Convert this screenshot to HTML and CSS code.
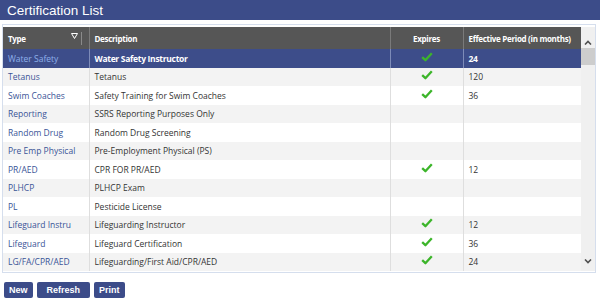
FILE: index.html
```html
<!DOCTYPE html>
<html lang="en">
<head>
    <meta charset="UTF-8">
    <meta name="viewport" content="width=device-width, initial-scale=1.0">
    <title>Certification List</title>
    <link rel="stylesheet" href="styles.css">
</head>
<body>
    <div class="title">Certification List</div>

    <div class="panel">
        <div class="grid">
            <table class="cert-table">
                <colgroup>
                    <col class="col-type">
                    <col class="col-desc">
                    <col class="col-exp">
                    <col class="col-period">
                </colgroup>
                <thead>
                    <tr>
                        <th class="th-type">
                            <span>Type</span>
                            <span class="filter">
                                <svg width="7" height="6" viewBox="0 0 7 6"><path d="M0.5 0.5 H6.5 L3.5 5.5 Z" fill="none" stroke="#fff" stroke-width="1"/></svg>
                            </span>
                        </th>
                        <th>Description</th>
                        <th class="center">Expires</th>
                        <th>Effective Period (in months)</th>
                    </tr>
                </thead>
                <tbody>
                    <tr class="selected"><td class="type">Water Safety</td><td>Water Safety Instructor</td><td class="center check"></td><td>24</td></tr>
                    <tr><td class="type">Tetanus</td><td>Tetanus</td><td class="center check"></td><td>120</td></tr>
                    <tr><td class="type">Swim Coaches</td><td>Safety Training for Swim Coaches</td><td class="center check"></td><td>36</td></tr>
                    <tr><td class="type">Reporting</td><td>SSRS Reporting Purposes Only</td><td></td><td></td></tr>
                    <tr><td class="type">Random Drug</td><td>Random Drug Screening</td><td></td><td></td></tr>
                    <tr><td class="type">Pre Emp Physical</td><td>Pre-Employment Physical (PS)</td><td></td><td></td></tr>
                    <tr><td class="type">PR/AED</td><td>CPR FOR PR/AED</td><td class="center check"></td><td>12</td></tr>
                    <tr><td class="type">PLHCP</td><td>PLHCP Exam</td><td></td><td></td></tr>
                    <tr><td class="type">PL</td><td>Pesticide License</td><td></td><td></td></tr>
                    <tr><td class="type">Lifeguard Instru</td><td>Lifeguarding Instructor</td><td class="center check"></td><td>12</td></tr>
                    <tr><td class="type">Lifeguard</td><td>Lifeguard Certification</td><td class="center check"></td><td>36</td></tr>
                    <tr><td class="type">LG/FA/CPR/AED</td><td>Lifeguarding/First Aid/CPR/AED</td><td class="center check"></td><td>24</td></tr>
                </tbody>
            </table>

            <div class="scrollbar">
                <svg class="arrow" width="8" height="5" viewBox="0 0 8 5"><path d="M1 4.5 L4 1.5 L7 4.5" fill="none" stroke="#505050" stroke-width="1.6"/></svg>
                <div class="thumb"></div>
                <div class="track"></div>
                <svg class="arrow" width="8" height="5" viewBox="0 0 8 5"><path d="M1 0.5 L4 3.5 L7 0.5" fill="none" stroke="#505050" stroke-width="1.6"/></svg>
            </div>
        </div>
    </div>

    <div class="actions">
        <button class="btn">New</button>
        <button class="btn btn-wide">Refresh</button>
        <button class="btn">Print</button>
    </div>

    <script>
        // drop a check mark into each "expires" cell
        const checkSvg = '<svg width="12" height="10" viewBox="0 0 12 10"><path d="M1.2 5.2 L4.4 8.2 L10.8 1.2" fill="none" stroke="#3cb52a" stroke-width="2.3" stroke-linejoin="round"/></svg>';
        document.querySelectorAll('.check').forEach(cell => {
            cell.innerHTML = checkSvg;
        });
    </script>
</body>
</html>
```

FILE: styles.css
```css
body {
    margin: 0;
    width: 600px;
    font-family: "Open Sans", "Noto Sans", sans-serif;
    background-color: #fff;
}

.title {
    height: 20px;
    line-height: 21px;
    padding-left: 7px;
    background-color: #3c4c89;
    color: white;
    font-family: "Liberation Sans", Arial, sans-serif;
    font-size: 13.5px;
}

.panel {
    margin: 4px 4px 0 2px;
    border: 1px solid #d5deed;
    padding: 2px 0 1px 0;
}

.grid {
    display: flex;
}

.cert-table {
    width: 578px;
    border-collapse: collapse;
    table-layout: fixed;
    font-size: 8.5px;
}

.col-type { width: 86px; }
.col-desc { width: 301px; }
.col-exp { width: 73px; }
.col-period { width: 118px; }

.cert-table th {
    height: 22px;
    padding: 0 5px;
    background-color: #565656;
    color: white;
    font-size: 8px;
    font-weight: bold;
    letter-spacing: -0.3px;
    text-align: left;
    white-space: nowrap;
    overflow: hidden;
    border-left: 1px solid #7a7a7a;
}

.cert-table th:first-child {
    border-left: none;
}

.th-type {
    position: relative;
}

.filter {
    position: absolute;
    right: 7px;
    top: 5px;
    height: 13px;
    padding-right: 3px;
    border-right: 1px solid #8a8a8a;
    line-height: 8px;
}

.cert-table td {
    height: 18.5px;
    padding: 0 5px;
    color: #333;
    border-left: 1px solid #dedede;
    white-space: nowrap;
    overflow: hidden;
}

.cert-table td:first-child {
    border-left: none;
}

.cert-table tbody tr:nth-child(even) td {
    background-color: #f3f3f3;
}

.cert-table td.type {
    color: #3a5497;
}

.center {
    text-align: center;
}

.cert-table th.center {
    text-align: center;
}

.check svg {
    display: block;
    margin: -3px auto 0;
}

.cert-table tr.selected td {
    background-color: #3d4d8a;
    color: white;
    font-weight: bold;
    letter-spacing: -0.3px;
    border-left-color: #7d8bb8;
}

.cert-table tr.selected td.type {
    color: #8eb0ea;
    font-weight: normal;
    letter-spacing: 0;
}

.scrollbar {
    width: 14px;
    background-color: #f0f0f0;
    display: flex;
    flex-direction: column;
    align-items: center;
    padding: 13px 0 7px;
}

.scrollbar .arrow {
    flex: none;
}

.thumb {
    width: 14px;
    height: 17px;
    margin-top: 3px;
    background-color: #cdcdcd;
}

.track {
    flex: 1;
}

.actions {
    display: flex;
    gap: 4px;
    padding: 9px 0 0 4px;
}

.btn {
    height: 16px;
    padding: 0 5px;
    border: none;
    border-radius: 2px;
    background-color: #3c4c89;
    color: white;
    font-family: "Liberation Sans", Arial, sans-serif;
    font-size: 9px;
    font-weight: bold;
    cursor: pointer;
}

.btn-wide {
    padding: 0 10px;
}
```
